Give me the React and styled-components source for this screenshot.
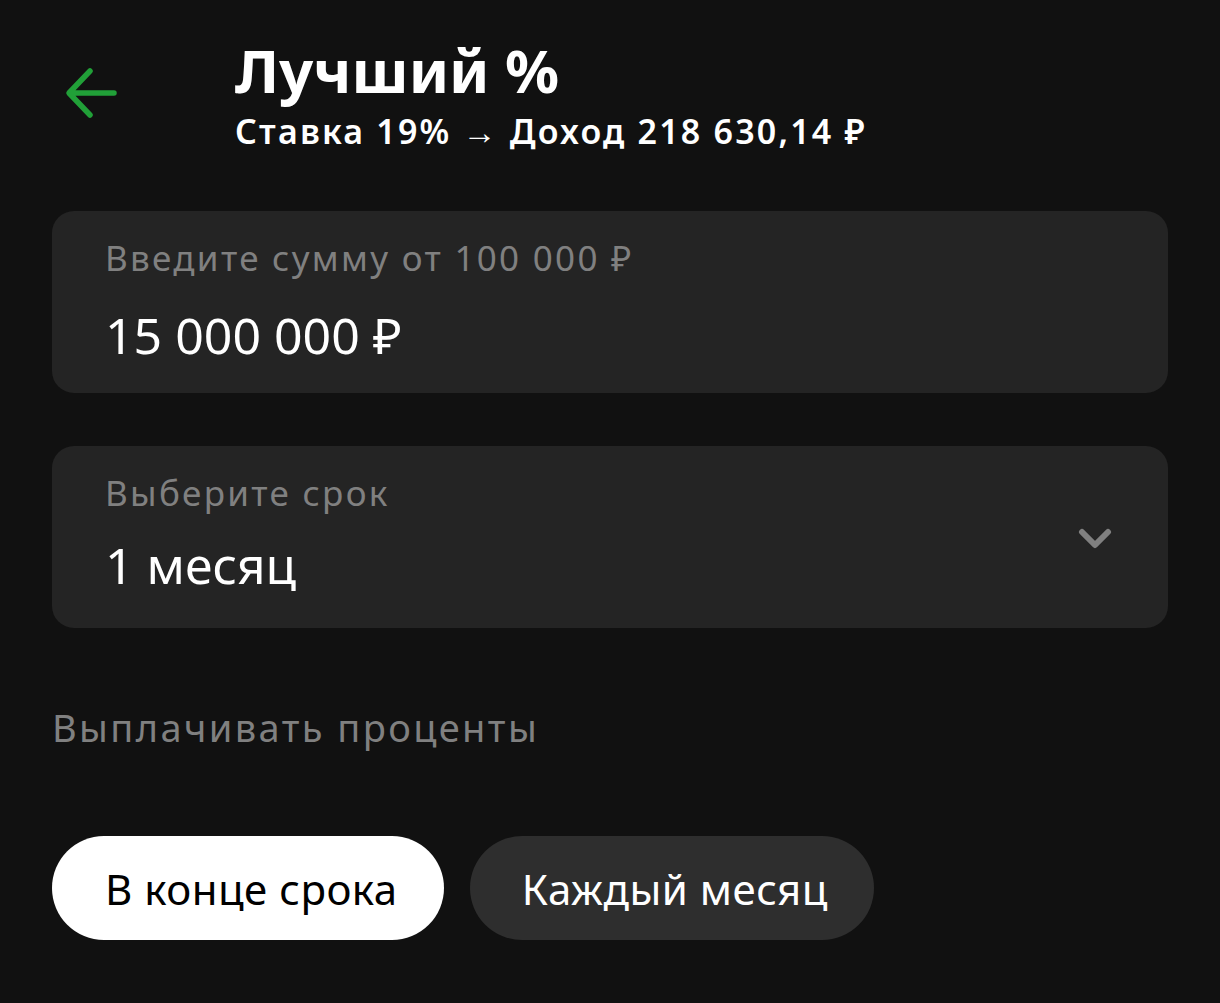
import React from "react";
import styled, { createGlobalStyle } from "styled-components";

const Global = createGlobalStyle`
  html, body { margin: 0; padding: 0; background: #111111; }
  body { font-family: "Noto Sans", "Open Sans", sans-serif; -webkit-font-smoothing: antialiased; }
`;

const Page = styled.div`
  width: 1220px;
  height: 1003px;
  background: #111111;
  box-sizing: border-box;
  padding: 35px 52px 0 52px;
  display: flex;
  flex-direction: column;
`;

const Header = styled.div`
  display: flex;
  align-items: flex-start;
`;

const BackButton = styled.button`
  width: 183px;
  height: 100px;
  padding: 30px 0 0 12px;
  margin: 0;
  border: none;
  background: transparent;
  display: flex;
  align-items: flex-start;
  cursor: pointer;
`;

const Titles = styled.div`
  display: flex;
  flex-direction: column;
`;

const Title = styled.h1`
  margin: 0;
  font-size: 60px;
  line-height: 70px;
  font-weight: 700;
  color: #ffffff;
`;

const Subtitle = styled.div`
  font-size: 34px;
  line-height: 44px;
  font-weight: 600;
  letter-spacing: 2.2px;
  color: #ffffff;
  margin-top: 4px;
`;

const Card = styled.div`
  margin-top: ${(p) => p.$mt}px;
  height: 182px;
  border-radius: 22px;
  background: #242424;
  box-sizing: border-box;
  padding: 24px 56px 0 53px;
  display: flex;
  align-items: center;
  justify-content: space-between;
`;

const CardBody = styled.div`
  display: flex;
  flex-direction: column;
  align-self: flex-start;
`;

const Label = styled.div`
  font-size: 35px;
  line-height: 46px;
  letter-spacing: 2.3px;
  color: #808080;
`;

const Value = styled.div`
  font-size: 50px;
  line-height: 60px;
  color: #ffffff;
  margin-top: ${(p) => p.$mt}px;
`;

const Chevron = styled.svg`
  width: 34px;
  height: 22px;
  margin-bottom: 20px;
`;

const Section = styled.div`
  margin-top: 73px;
  font-size: 38px;
  line-height: 52px;
  letter-spacing: 2.4px;
  color: #808080;
`;

const Options = styled.div`
  margin-top: 83px;
  display: flex;
  gap: 26px;
`;

const Option = styled.button`
  height: 104px;
  border: none;
  border-radius: 52px;
  padding: 0 46px 0 ${(p) => p.$pl}px;
  font-family: inherit;
  font-size: 42px;
  letter-spacing: 0.5px;
  color: ${(p) => (p.$active ? "#000000" : "#ffffff")};
  background: ${(p) => (p.$active ? "#ffffff" : "#2e2e2e")};
  cursor: pointer;
`;

export default function App() {
  return (
    <>
      <Global />
      <Page>
        <Header>
          <BackButton aria-label="Назад">
            <svg width="56" height="56" viewBox="0 0 56 56" fill="none">
              <path
                d="M50 28H6M26 6L5 28l21 22"
                stroke="#21a038"
                strokeWidth="5.5"
                strokeLinecap="round"
                strokeLinejoin="round"
              />
            </svg>
          </BackButton>
          <Titles>
            <Title>Лучший %</Title>
            <Subtitle>Ставка 19% → Доход 218 630,14 ₽</Subtitle>
          </Titles>
        </Header>

        <Card $mt={58}>
          <CardBody>
            <Label>Введите сумму от 100 000 ₽</Label>
            <Value $mt={24}>15 000 000 ₽</Value>
          </CardBody>
        </Card>

        <Card $mt={53}>
          <CardBody>
            <Label>Выберите срок</Label>
            <Value $mt={19}>1 месяц</Value>
          </CardBody>
          <Chevron viewBox="0 0 34 22" fill="none">
            <path
              d="M4 4l13 13L30 4"
              stroke="#808080"
              strokeWidth="6"
              strokeLinecap="round"
              strokeLinejoin="round"
            />
          </Chevron>
        </Card>

        <Section>Выплачивать проценты</Section>

        <Options>
          <Option $active $pl={53}>В конце срока</Option>
          <Option $pl={52}>Каждый месяц</Option>
        </Options>
      </Page>
    </>
  );
}
